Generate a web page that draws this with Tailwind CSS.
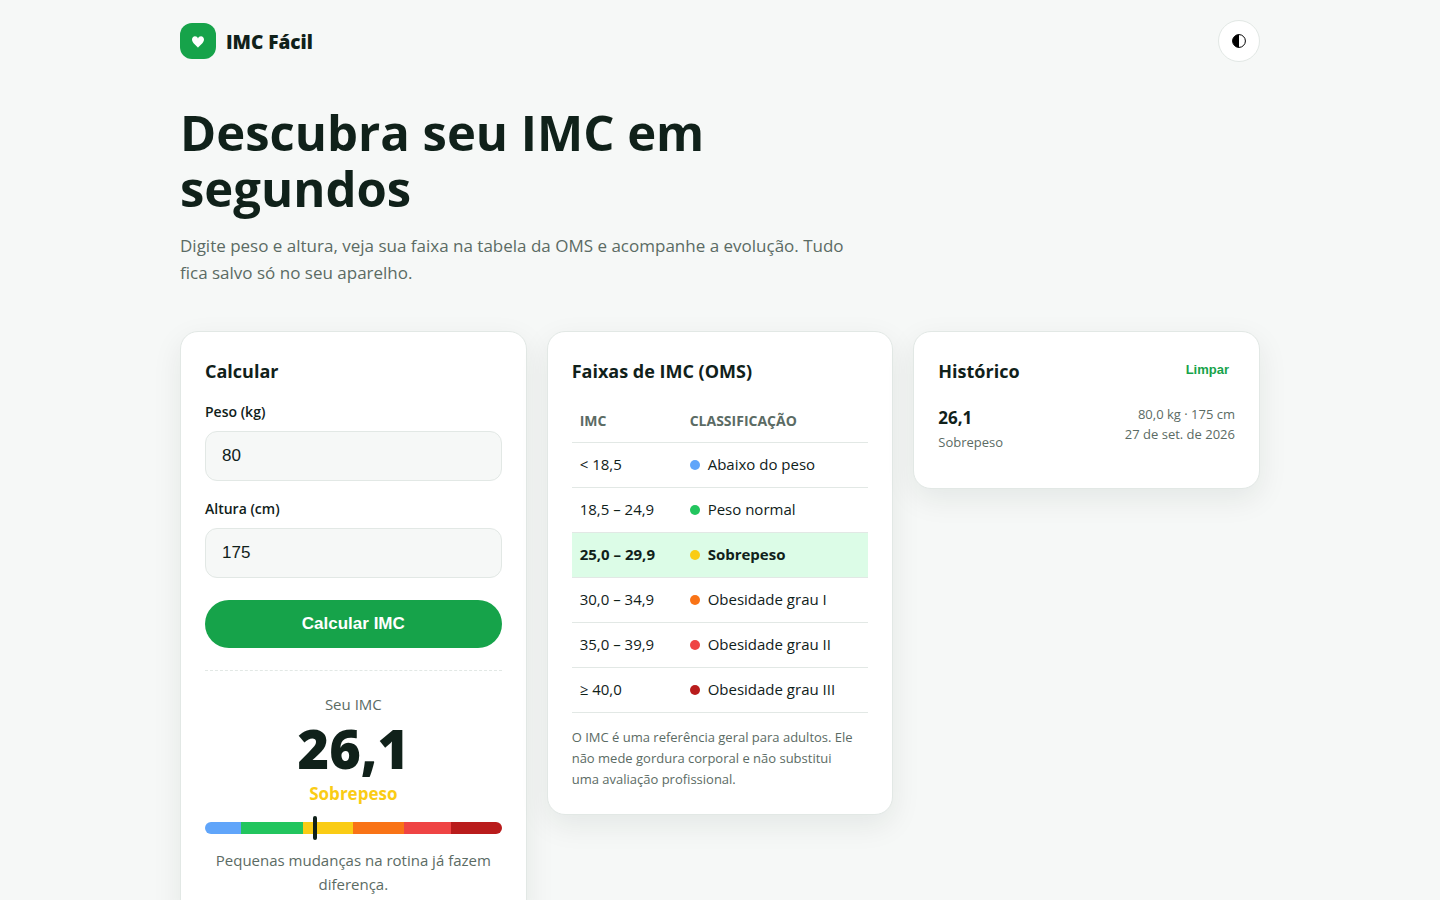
<!DOCTYPE html>
<html lang="pt-BR">
<head>
    <meta charset="UTF-8">
    <meta name="viewport" content="width=device-width, initial-scale=1.0">
    <title>IMC Fácil</title>

    <!-- Tailwind CSS -->
    <script src="https://cdn.jsdelivr.net/npm/@tailwindcss/browser@4"></script>
</head>
<body class="min-h-screen bg-[#f6f8f7] text-[#10211a] text-base font-['Open_Sans',sans-serif]">

    <div class="max-w-[1120px] mx-auto px-5">

        <header class="flex items-center justify-between py-5">
            <a href="#" class="flex items-center gap-2.5">
                <span class="flex items-center justify-center size-9 pt-0.5 rounded-xl bg-[#16a34a]">
                    <svg class="size-3" viewBox="0 0 12 12" fill="#fff" aria-hidden="true">
                        <path d="M6 11.8C5 10 0 7.200 0 3.600C0 1.700 1.300.300 3 .300C4.400.300 5.500 1.100 6 2.400C6.500 1.100 7.600.300 9 .300C10.700.300 12 1.700 12 3.600C12 7.200 7 10 6 11.800Z"/>
                    </svg>
                </span>
                <span class="pt-0.5 text-[19px] font-extrabold">IMC Fácil</span>
            </a>
            <button type="button" aria-label="Alternar tema" class="flex items-center justify-center size-[42px] rounded-full bg-white border border-[#e2e8e5]">
                <svg class="size-3.5" viewBox="0 0 14 14" aria-hidden="true">
                    <circle cx="7" cy="7" r="6.400" fill="none" stroke="#000" stroke-width="1"/>
                    <path d="M7 .600A6.400 6.400 0 0 0 7 13.400Z" fill="#000"/>
                </svg>
            </button>
        </header>

        <main>
            <!-- Hero -->
            <section class="max-w-[680px] pt-[22px] pb-[45px]">
                <h1 class="text-[49px] leading-14 font-bold">Descubra seu IMC em segundos</h1>
                <p class="mt-4 text-[17px] leading-[27px] text-[#5b6b64]">Digite peso e altura, veja sua faixa na tabela da OMS e acompanhe a evolução. Tudo fica salvo só no seu aparelho.</p>
            </section>

            <div class="grid grid-cols-1 md:grid-cols-3 items-start gap-5 pb-10">

                <!-- Calculadora -->
                <section class="bg-white border border-[#e2e8e5] rounded-[18px] p-6 shadow-[0_10px_30px_rgba(16,33,26,0.08)]">
                    <h2 class="text-lg leading-[30px] font-bold">Calcular</h2>
                    <form class="mt-3.5">
                        <label for="peso" class="block text-sm leading-6 font-semibold">Peso (kg)</label>
                        <input id="peso" type="text" inputmode="decimal" value="80" class="block w-full h-[50px] mt-[7px] px-4 rounded-xl border border-[#e2e8e5] bg-[#f6f8f7] text-[17px] font-['Liberation_Sans',sans-serif]">
                        <label for="altura" class="block mt-4 text-sm leading-6 font-semibold">Altura (cm)</label>
                        <input id="altura" type="text" inputmode="numeric" value="175" class="block w-full h-[50px] mt-[7px] px-4 rounded-xl border border-[#e2e8e5] bg-[#f6f8f7] text-[17px] font-['Liberation_Sans',sans-serif]">
                        <button type="button" class="block w-full h-12 mt-[22px] rounded-full bg-[#16a34a] text-white text-[17px] font-bold font-['Liberation_Sans',sans-serif]">Calcular IMC</button>
                    </form>

                    <div class="mt-[22px] pt-[21px] border-t border-dashed border-[#e2e8e5] text-center">
                        <p class="text-[15px] leading-6 text-[#5b6b64]">Seu IMC</p>
                        <p class="mt-1 text-[54px] leading-14 font-extrabold">26,1</p>
                        <p class="mt-1 text-[17px] leading-7 font-bold text-[#facc15]">Sobrepeso</p>
                        <div class="relative mt-3.5">
                            <div class="flex h-3 rounded-full overflow-hidden">
                                <span class="w-[12%] bg-[#60a5fa]"></span>
                                <span class="w-[21%] bg-[#22c55e]"></span>
                                <span class="w-[17%] bg-[#facc15]"></span>
                                <span class="w-[17%] bg-[#f97316]"></span>
                                <span class="w-[16%] bg-[#ef4444]"></span>
                                <span class="w-[17%] bg-[#b91c1c]"></span>
                            </div>
                            <span class="absolute -top-1.5 w-1 h-6 -translate-x-1/2 rounded-sm bg-[#10211a]" style="left: 37%"></span>
                        </div>
                        <p class="mt-3.5 text-[15px] leading-6 text-[#5b6b64]">Pequenas mudanças na rotina já fazem diferença.</p>
                    </div>
                </section>

                <!-- Tabela da OMS -->
                <section class="bg-white border border-[#e2e8e5] rounded-[18px] p-6 shadow-[0_10px_30px_rgba(16,33,26,0.08)]">
                    <h2 class="text-lg leading-[30px] font-bold">Faixas de IMC (OMS)</h2>
                    <table class="w-full mt-3.5 text-[15px] text-left">
                        <thead>
                            <tr class="h-[42px] border-b border-[#e2e8e5] text-sm uppercase text-[#5b6b64]">
                                <th class="w-[110px] px-2 font-bold">IMC</th>
                                <th class="px-2 font-bold">Classificação</th>
                            </tr>
                        </thead>
                        <tbody>
                            <tr class="h-[45px] border-b border-[#e2e8e5]">
                                <td class="px-2">&lt; 18,5</td>
                                <td class="px-2"><span class="inline-block size-2.5 mr-2 rounded-full bg-[#60a5fa]"></span>Abaixo do peso</td>
                            </tr>
                            <tr class="h-[45px] border-b border-[#e2e8e5]">
                                <td class="px-2">18,5 – 24,9</td>
                                <td class="px-2"><span class="inline-block size-2.5 mr-2 rounded-full bg-[#22c55e]"></span>Peso normal</td>
                            </tr>
                            <tr class="h-[45px] border-b border-[#e2e8e5] bg-[#dcfce7] font-bold">
                                <td class="px-2">25,0 – 29,9</td>
                                <td class="px-2"><span class="inline-block size-2.5 mr-2 rounded-full bg-[#facc15]"></span>Sobrepeso</td>
                            </tr>
                            <tr class="h-[45px] border-b border-[#e2e8e5]">
                                <td class="px-2">30,0 – 34,9</td>
                                <td class="px-2"><span class="inline-block size-2.5 mr-2 rounded-full bg-[#f97316]"></span>Obesidade grau I</td>
                            </tr>
                            <tr class="h-[45px] border-b border-[#e2e8e5]">
                                <td class="px-2">35,0 – 39,9</td>
                                <td class="px-2"><span class="inline-block size-2.5 mr-2 rounded-full bg-[#ef4444]"></span>Obesidade grau II</td>
                            </tr>
                            <tr class="h-[45px] border-b border-[#e2e8e5]">
                                <td class="px-2">≥ 40,0</td>
                                <td class="px-2"><span class="inline-block size-2.5 mr-2 rounded-full bg-[#b91c1c]"></span>Obesidade grau III</td>
                            </tr>
                        </tbody>
                    </table>
                    <p class="mt-3.5 pr-3 text-[13px] leading-[21px] text-[#5b6b64]">O IMC é uma referência geral para adultos. Ele não mede gordura corporal e não substitui uma avaliação profissional.</p>
                </section>

                <!-- Histórico -->
                <section class="bg-white border border-[#e2e8e5] rounded-[18px] p-6 shadow-[0_10px_30px_rgba(16,33,26,0.08)]">
                    <div class="flex items-start justify-between">
                        <h2 class="text-lg leading-[30px] font-bold">Histórico</h2>
                        <button type="button" class="px-1.5 py-1 text-[13px] font-bold text-[#16a34a] font-['Liberation_Sans',sans-serif]">Limpar</button>
                    </div>
                    <ul class="mt-1.5">
                        <li class="flex justify-between py-3">
                            <div>
                                <p class="text-[17px] leading-7 font-bold">26,1</p>
                                <p class="text-[13px] leading-5 text-[#5b6b64]">Sobrepeso</p>
                            </div>
                            <p class="text-right text-[13px] leading-5 text-[#5b6b64]">80,0 kg · 175 cm<br>27 de set. de 2026</p>
                        </li>
                    </ul>
                </section>
            </div>
        </main>
    </div>
</body>
</html>
